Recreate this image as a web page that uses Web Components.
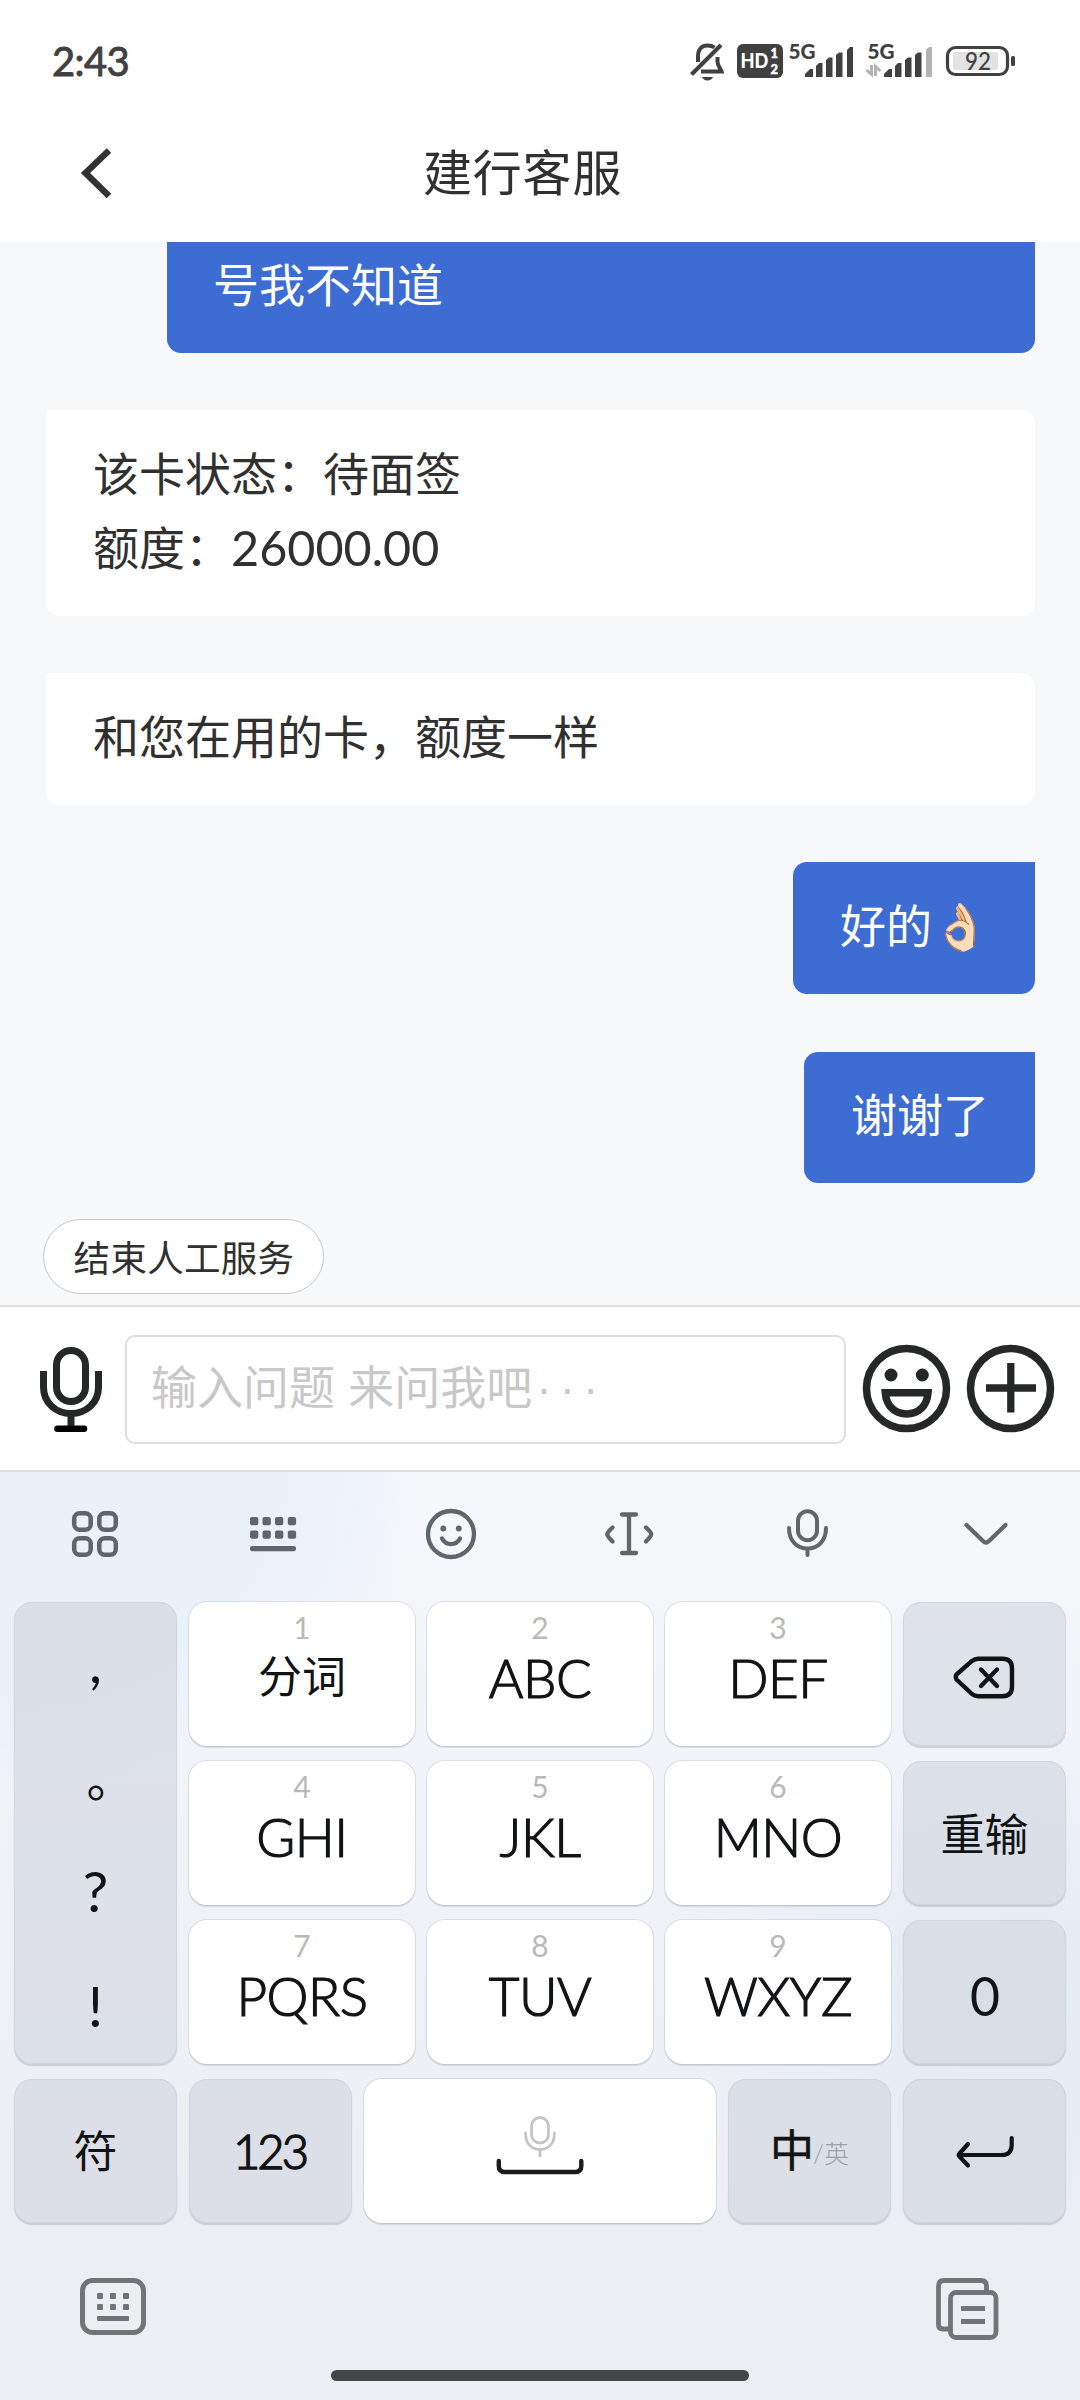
<!DOCTYPE html>
<html lang="zh-CN">
<head>
<meta charset="utf-8">
<title>建行客服</title>
<style>
html,body{margin:0;padding:0}
body{width:1080px;height:2400px;overflow:hidden;background:#fff;font-family:Lato,"Noto Sans CJK SC",sans-serif;color:#333}
</style>
</head>
<body>
<chat-app></chat-app>
<script>
const define=(name,html)=>customElements.define(name,class extends HTMLElement{
  constructor(){super();this.attachShadow({mode:'open'});}
  connectedCallback(){this.shadowRoot.innerHTML=typeof html==='function'?html(this):html;}
});

/* Each entry: viewBox, markup */
const ICONS={
 back:['76 142 40 62','<path d="M108 150.500 84.500 173 108 196" fill="none" stroke="#333" stroke-width="6.500"/>'],
 mute:['688 40 40 44','<g fill="none" stroke="#404040" stroke-width="4"><path d="M698 62V56.500C698 49 702 45.500 707.500 45.500C710.500 45.500 712.500 46 714.500 47.500"/><path d="M717.500 57V61.500C717.500 66 720.500 68.500 721.500 71.500H701"/><path d="M691.500 74.500 721 45"/></g><path d="M702 77h11c-1.500 4.500-9.500 4.500-11 0z" fill="#404040"/>'],
 hd:['736 42 48 38','<rect x="737" y="44" width="46" height="34" rx="6" fill="#404040"/><g fill="#fff" font-family="Lato" font-weight="900"><text x="740.500" y="67.500" font-size="20.500" textLength="28" lengthAdjust="spacingAndGlyphs">HD</text><text x="770.500" y="58" font-size="12.800" stroke="#fff" stroke-width=".5">1</text><text x="770.500" y="73.700" font-size="12.800" stroke="#fff" stroke-width=".5">2</text></g>'],
 sig1:['788 40 66 40','<text x="788.500" y="59" font-size="20.500" font-family="Lato" font-weight="900" fill="#404040" textLength="27" lengthAdjust="spacingAndGlyphs">5G</text><g fill="#404040"><path d="M805 77v-3l5-5h3v8z"/><path d="M816 77V66l3-3h3.500v14z"/><path d="M826 77V60l3-2.500h3.500V77z"/><path d="M836 77V55l3-2.500h3.500V77z"/><path d="M847 77V50l3-3h3v30z"/></g>'],
 sig2:['864 40 70 40','<text x="867.500" y="59" font-size="20.500" font-family="Lato" font-weight="900" fill="#404040" textLength="27" lengthAdjust="spacingAndGlyphs">5G</text><g fill="#404040"><path d="M884 77v-3l5-5h3v8z"/><path d="M895 77V66l3-3h3.500v14z"/><path d="M905 77V60l3-2.500h3.500V77z"/><path d="M915 77V55l3-2.500h3.500V77z"/><path fill="#b3b3b3" d="M926 77V50l3-3h3v30z"/></g><path d="M871.500 65v9.500l-5-4.500M875.500 76V66.500l5 4.500" fill="none" stroke="#b3b3b3" stroke-width="3"/>'],
 batt:['945 44 72 34','<rect x="947.500" y="47.500" width="60" height="27" rx="8" fill="none" stroke="#404040" stroke-width="3.200"/><rect x="953" y="52" width="45" height="18" rx="2" fill="#e2e2e2"/><rect x="1011" y="56" width="4" height="10" rx="1.500" fill="#404040"/><text x="978" y="69.700" text-anchor="middle" font-family="Lato" font-weight="500" font-size="24" fill="#404040" textLength="26" lengthAdjust="spacingAndGlyphs">92</text>'],
 micBig:['38 1343 66 92','<g fill="none" stroke="#262828" stroke-width="7"><rect x="56.500" y="1350.500" width="29" height="51" rx="14.500"/><path d="M43.500 1371v16c0 16 12.500 26.500 27.500 26.500s27.500-10.500 27.500-26.500v-16M71 1413v14"/></g><path d="M57.500 1428.700h26.500" stroke="#000" stroke-width="6.600" stroke-linecap="round"/>'],
 faceBig:['861 1343 91 91','<circle cx="906.500" cy="1388.500" r="40" fill="none" stroke="#262828" stroke-width="7.500"/><circle cx="891" cy="1375" r="6.500" fill="#262828"/><circle cx="922.300" cy="1375" r="6.500" fill="#262828"/><path d="M885.300 1392.700h42.700c-1 14-10 21.300-21.300 21.300s-20.400-7.300-21.400-21.300z" fill="none" stroke="#262828" stroke-width="7.500"/>'],
 plusBig:['965 1343 91 91','<circle cx="1010.500" cy="1388.500" r="40" fill="none" stroke="#262828" stroke-width="7.500"/><path d="M986 1388h50M1010.800 1363v49.500" stroke="#262828" stroke-width="7.300"/>'],
 grid:['70 1509 50 50','<g fill="none" stroke="#60646b" stroke-width="4.500"><rect x="74.200" y="1513.300" width="16.500" height="16.500" rx="5.500"/><rect x="99.300" y="1513.300" width="16.500" height="16.500" rx="5.500"/><rect x="74.200" y="1538.300" width="16.500" height="16.500" rx="5.500"/><rect x="99.300" y="1538.300" width="16.500" height="16.500" rx="5.500"/></g>'],
 keys:['248 1509 50 50','<g fill="#60646b">'+[250,262.5,275,287.8].map(x=>[1517,1530.5].map(y=>`<rect x="${x}" y="${y}" width="8.300" height="8.300" rx="2"/>`).join('')).join('')+'<rect x="250" y="1546" width="46" height="5.300" rx="2.200"/></g>'],
 face:['424 1507 54 54','<g fill="none" stroke="#60646b" stroke-width="4.300" stroke-linecap="round"><circle cx="451" cy="1534" r="23"/><path d="M442 1538.500c4 7.500 14 7.500 18 0"/></g><circle cx="443.300" cy="1528.500" r="2.900" fill="#60646b"/><circle cx="458.800" cy="1528.500" r="2.900" fill="#60646b"/>'],
 cursor:['602 1509 54 50','<g fill="none" stroke="#636569" stroke-width="4.300" stroke-linecap="round" stroke-linejoin="round"><path d="M622 1514.500h14M629 1514.500v38.500M622 1553h14M612.500 1527.500c-7 6.500-7 7 0 14M646 1527.500c7 6.500 7 7 0 14"/></g>'],
 mic:['781 1508 52 54','<g fill="none" stroke="#636569" stroke-width="4" stroke-linecap="round"><rect x="798" y="1512.200" width="19" height="29" rx="9.500"/><path d="M789 1529c0 13 8 20.500 18.500 20.500s18.500-7.500 18.500-20.500M807.500 1550v6"/></g>'],
 down:['959 1510 52 50','<path d="M966.500 1526l16.500 16q3 3 6 0l16.500-16" fill="none" stroke="#636569" stroke-width="4.200" stroke-linecap="round"/>'],
 del:['951 1650 68 50','<g fill="none" stroke="#121315" stroke-width="4.400" stroke-linecap="round" stroke-linejoin="round"><path d="M956.500 1674.500q-1.500 2.500 0 5l15.500 14.500q3 2.200 6 2.200h24.500q9.500 0 9.500-9.500v-18.500q0-9.500-9.500-9.500h-24.500q-3 0-6 2.200z"/><path d="M981 1669.500l16 16.500M997 1669.500l-16 16.500"/></g>'],
 enter:['951 2129 68 44','<path d="M1011.700 2138v7q0 10-10 10H960.500M968 2144l-8.500 9.500q-1.500 1.500 0 3l8.500 9" fill="none" stroke="#121315" stroke-width="4.200" stroke-linecap="round" stroke-linejoin="round"/>'],
 space:['490 2110 100 68','<g fill="none" stroke="#c4c4c4" stroke-width="2.800" stroke-linecap="round"><rect x="531.500" y="2117.500" width="17" height="25.500" rx="8.500"/><path d="M525.500 2133c0 11 6.500 16.500 14.500 16.500s14.500-5.500 14.500-16.500M540 2150v6"/></g><path d="M498.800 2161v5q0 6 6 6h70.500q6 0 6-6v-5" fill="none" stroke="#1b1b1b" stroke-width="4.400" stroke-linecap="round"/>'],
 board:['78 2276 70 62','<rect x="82.500" y="2280.500" width="61" height="52" rx="10" fill="none" stroke="#737475" stroke-width="5"/><g fill="#737475">'+[97,110,123].map(x=>[2293,2304].map(y=>`<rect x="${x}" y="${y}" width="6" height="6" rx="1"/>`).join('')).join('')+'<rect x="97" y="2316" width="32" height="5" rx="1"/></g>'],
 clip:['934 2274 66 66','<g fill="none" stroke="#737475" stroke-width="4.800"><path d="M986.500 2288v-4q0-5.500-5.500-5.500h-37q-5.500 0-5.500 5.500v38.500q0 4.500 4.500 4.500h6"/><rect x="950.500" y="2290.500" width="45.500" height="45" rx="5.500"/><path d="M961 2306.500h24M961 2319.500h24"/></g>']
};
define('ui-icon',el=>{const [vb,body]=ICONS[el.getAttribute('name')];const [x,y,w,h]=vb.split(' ');
 return `<style>:host{display:block;flex:none;width:${w}px;height:${h}px}svg{display:block}</style><svg width="${w}" height="${h}" viewBox="${vb}">${body}</svg>`});

define('status-bar',`<style>
:host{display:flex;align-items:flex-start;height:112px;padding:0 63px 0 52px;color:#404040;background:#fff}
time{font:400 40px/48px Lato;margin-top:37px;letter-spacing:-.6px;flex:1;-webkit-text-stroke:.9px #404040}
ui-icon{margin-top:40px}ui-icon[name=hd]{margin:42px 4px 0 8px}ui-icon[name=sig2]{margin-left:10px;margin-right:11px}ui-icon[name=batt]{margin-top:44px}
</style><time>2:43</time><ui-icon name="mute"></ui-icon><ui-icon name="hd"></ui-icon><ui-icon name="sig1"></ui-icon><ui-icon name="sig2"></ui-icon><ui-icon name="batt"></ui-icon>`);

define('nav-bar',`<style>
:host{display:flex;height:130px;background:#fff;align-items:flex-start}
ui-icon{margin:30px 0 0 77px}
h1{margin:22px 0 0 306px;font:400 49px/72px "Noto Sans CJK SC",sans-serif;letter-spacing:.8px;color:#303030}
</style><ui-icon name="back"></ui-icon><h1><slot></slot></h1>`);

define('chat-bubble',`<style>
:host{display:block;box-sizing:border-box;padding:26.500px 46px 31px 47px;font:400 46px/74px Lato,"Noto Sans CJK SC",sans-serif;color:#303030;background:#fff;border-radius:4px 14px 14px 14px;white-space:nowrap;align-self:stretch}
:host([mine]){background:#3d6dd2;color:#fff;border-radius:14px 0 14px 14px;align-self:flex-end}
:host([wide]){width:868px;padding-left:46px}
::slotted(b){font-weight:400;font-size:48.500px;line-height:0;position:relative;top:1px}
</style><slot></slot>`);

define('chat-log',`<style>
:host{display:flex;flex-direction:column;justify-content:flex-end;gap:57.600px;height:941px;padding:0 45px 122px 46px;background:#f6f8fa;overflow:hidden}
</style><slot></slot>`);

define('quick-reply',`<style>
:host{display:flex;height:86px;padding:0 43px;background:#f6f8fa;margin-top:-86px;position:relative}
button{all:unset;box-sizing:border-box;height:75px;width:281px;border:1px solid #c6c8ca;border-radius:38px;background:#fff;text-align:center;font:400 36.500px/67px "Noto Sans CJK SC",sans-serif;color:#303030;letter-spacing:.3px;text-indent:1px}
</style><button><slot></slot></button>`);

define('input-bar',`<style>
:host{display:flex;box-sizing:border-box;height:167px;border-top:2px solid #dedede;border-bottom:2px solid #dedfe0;background:#fff;padding:28px 24px 0 38px}
ui-icon{margin-top:8px}ui-icon[name=faceBig]{margin-left:15px}ui-icon[name=plusBig]{margin-left:13px}
.box{box-sizing:border-box;width:721px;height:109px;margin-left:21px;border:2px solid #dedede;border-radius:10px;padding-left:24px;font:400 46px/95px "Noto Sans CJK SC",sans-serif;color:#c8c8c8;white-space:pre;word-spacing:3px}
.dots{font-family:"Liberation Sans";letter-spacing:8px;margin-left:4px}
</style><ui-icon name="micBig"></ui-icon><div class="box">输入问题 来问我吧<span class="dots">···</span></div><ui-icon name="faceBig"></ui-icon><ui-icon name="plusBig"></ui-icon>`);

define('ime-key',el=>`<style>
:host{display:flex;flex-direction:column;align-items:center;box-sizing:border-box;height:144px;border-radius:18px;background:#fff;box-shadow:0 0 0 1px rgba(120,130,145,.18),0 2px 1px rgba(120,130,150,.22);color:#121315;font:400 44px/60px Lato,"Noto Sans CJK SC",sans-serif}
:host([fn]){background:rgba(204,209,220,.53);justify-content:center;box-shadow:inset 0 0 0 1px rgba(150,160,175,.16),0 2px 1px rgba(120,130,150,.3)}
small{font:400 30px/30px Lato;color:#b9b9b9;margin-top:10px}
.m{white-space:nowrap}
:host([abc]) .m{font-size:53px;font-weight:300;letter-spacing:-.5px;-webkit-text-stroke:1.2px #121315;margin-top:6px}
:host([cjk]) .m{margin-top:4px}
</style>${el.hasAttribute('n')?`<small>${el.getAttribute('n')}</small>`:''}<div class="m"><slot></slot></div>`);

define('ime-punct',`<style>
:host{display:flex;flex-direction:column;align-items:center;box-sizing:border-box;height:462px;border-radius:18px;background:rgba(204,209,220,.53);box-shadow:inset 0 0 0 1px rgba(150,160,175,.16),0 2px 1px rgba(120,130,150,.3);color:#121315;font:400 57px/116px Lato}
span{height:115px}
.cn{font-family:"Noto Sans CJK SC";font-size:48px;width:48px;text-indent:15px;line-height:118px}
</style><span style="line-height:118px">,</span><span class="cn">。</span><span>?</span><span>!</span>`);

define('ime-board',`<style>
:host{display:block;height:928px;background:radial-gradient(ellipse 520px 400px at 0 0,#e9f1fa 0 55%,transparent 82%),radial-gradient(ellipse 380px 260px at 1020px 530px,#e2ebf5,transparent),linear-gradient(#f5f7fb,#f1f2f7 400px,#edeef3 750px)}
.tools{display:flex;height:124px;padding:0 6px 6px;align-items:center}
.tools div{flex:1;display:flex;justify-content:center}
.pad,.last{display:grid;gap:15px 12px;padding:0 14px}
.pad{grid-template-columns:163px 226px 226px 226px 163px}
.last{grid-template-columns:163px 163px 352px 163px 163px;margin-top:15px}
ime-punct{grid-row:span 3}
.foot{display:flex;justify-content:space-between;padding:53px 80px 0 78px}
.home{width:418px;height:11px;border-radius:6px;background:#444548;margin:28px auto 0}
.lang{display:flex;align-items:center;font-size:44px;-webkit-text-stroke:.5px;margin-top:-3px}
.lang small{font-size:25px;font-weight:300;color:#9ca2ab;margin-left:-1px;padding-top:7px;-webkit-text-stroke:0}
</style>
<div class="tools"><div><ui-icon name="grid"></ui-icon></div><div><ui-icon name="keys"></ui-icon></div><div><ui-icon name="face"></ui-icon></div><div><ui-icon name="cursor"></ui-icon></div><div><ui-icon name="mic"></ui-icon></div><div><ui-icon name="down"></ui-icon></div></div>
<div class="pad"><ime-punct></ime-punct>
<ime-key n="1" cjk>分词</ime-key><ime-key n="2" abc>ABC</ime-key><ime-key n="3" abc>DEF</ime-key><ime-key fn><ui-icon name="del" style="margin-top:2px"></ui-icon></ime-key>
<ime-key n="4" abc>GHI</ime-key><ime-key n="5" abc>JKL</ime-key><ime-key n="6" abc>MNO</ime-key><ime-key fn><div style="margin-top:2px">重输</div></ime-key>
<ime-key n="7" abc>PQRS</ime-key><ime-key n="8" abc>TUV</ime-key><ime-key n="9" abc>WXYZ</ime-key><ime-key fn><div style="font-size:55px;margin-top:6px;transform:scaleX(.94)">0</div></ime-key></div>
<div class="last"><ime-key fn>符</ime-key><ime-key fn><div style="font-size:47px;font-weight:300;-webkit-text-stroke:1.500px;letter-spacing:-3px;margin-left:-2px">123</div></ime-key><ime-key><ui-icon name="space" style="margin-top:31px"></ui-icon></ime-key><ime-key fn><span class="lang">中<small>/英</small></span></ime-key><ime-key fn><ui-icon name="enter"></ui-icon></ime-key></div>
<div class="foot"><ui-icon name="board"></ui-icon><ui-icon name="clip"></ui-icon></div><div class="home"></div>`);

define('chat-app',`<style>:host{display:block;width:1080px;height:2400px;overflow:hidden}</style>
<status-bar></status-bar><nav-bar>建行客服</nav-bar>
<chat-log>
<chat-bubble mine wide>号我不知道</chat-bubble>
<chat-bubble>该卡状态：待面签<br>额度：<b>26000.00</b></chat-bubble>
<chat-bubble>和您在用的卡，额度一样</chat-bubble>
<chat-bubble mine>好的👌🏻</chat-bubble>
<chat-bubble mine>谢谢了</chat-bubble>
</chat-log>
<quick-reply>结束人工服务</quick-reply>
<input-bar></input-bar>
<ime-board></ime-board>`);
</script>
</body>
</html>
